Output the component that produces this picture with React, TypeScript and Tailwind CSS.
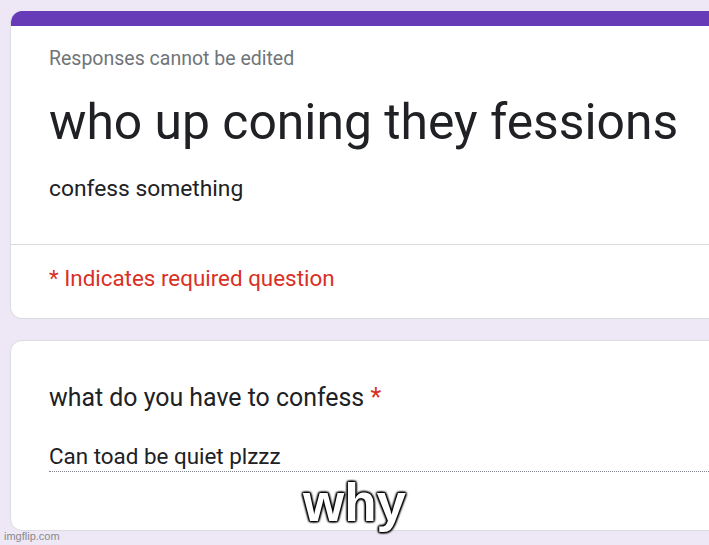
import React from 'react';

const App = () => {
  return (
    <div className="relative w-[709px] h-[545px] overflow-hidden bg-[#ede7f6] pt-[11px] pl-[10px] font-['Roboto',sans-serif]">
      {/* Header card */}
      <div className="w-[720px] rounded-[12px] overflow-hidden bg-white border border-[#dadce0] border-t-0">
        <div className="h-[15px] bg-[#673ab7]" />
        <div className="pl-[38px] pt-[21px]">
          <div className="text-[19.5px] leading-[24px] text-[#70757a]">Responses cannot be edited</div>
          <div className="mt-[23px] text-[49.8px] leading-[56px] text-[#202124]">who up coning they fessions</div>
          <div className="mt-[26px] text-[22.8px] leading-[26px] text-[#202124]">confess something</div>
        </div>
        <div className="mt-[42px] border-t border-[#dadce0]" />
        <div className="pl-[38px] pt-[20px] pb-[27px] text-[22.4px] leading-[26px] text-[#d93025]">* Indicates required question</div>
      </div>

      {/* Question card */}
      <div className="mt-[21px] w-[720px] h-[191px] rounded-[12px] bg-white border border-[#dadce0] pl-[38px] pt-[43px]">
        <div className="text-[24.9px] leading-[28px] text-[#202124]">
          what do you have to confess <span className="text-[#d93025]">*</span>
        </div>
        <div className="mt-[31px] pb-[2px] border-b border-dotted border-[#80868b] text-[22.4px] leading-[26px] text-[#202124]">
          Can toad be quiet plzzz
        </div>
      </div>

      {/* meme caption */}
      <div className="absolute left-0 right-0 top-[472px] text-center text-[53px] leading-[62px] font-bold text-white font-['Liberation_Sans',Arial,sans-serif] [text-shadow:0_0_3px_#000,0_0_3px_#000,1px_1px_2px_#000,-1px_-1px_2px_#000,1px_-1px_2px_#000,-1px_1px_2px_#000]">
        why
      </div>
      <div className="absolute left-[4px] bottom-[2px] text-[11px] leading-[13px] text-[#8a8a8a] font-['Liberation_Sans',Arial,sans-serif]">imgflip.com</div>
    </div>
  );
};

export default App;
